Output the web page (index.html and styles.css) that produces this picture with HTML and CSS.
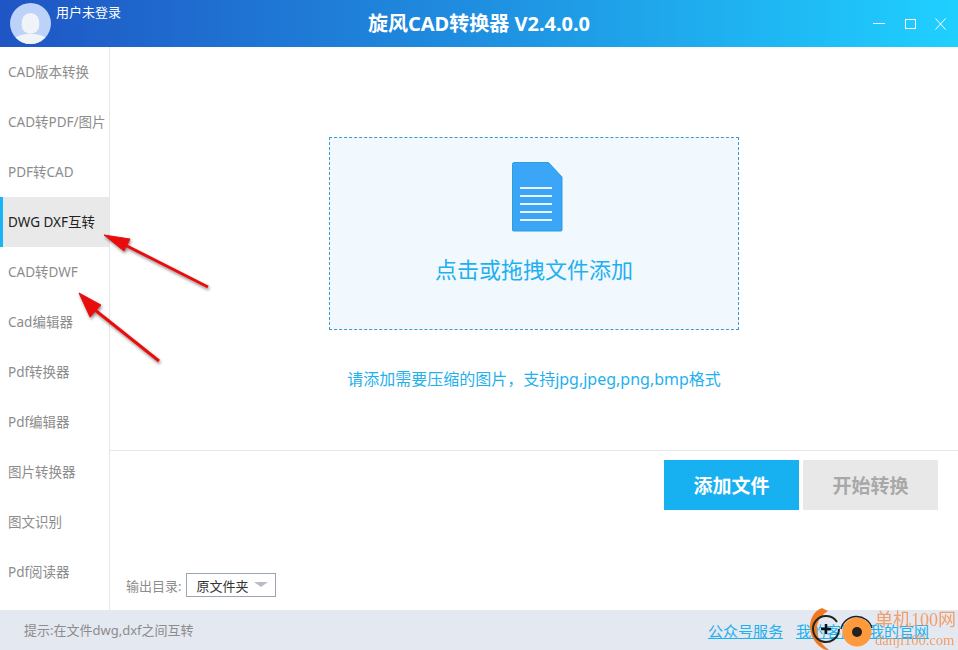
FILE: index.html
```html
<!DOCTYPE html>
<html lang="zh-CN">
<head>
  <meta charset="UTF-8" />
  <title>旋风CAD转换器</title>
  <link rel="stylesheet" href="styles.css">
</head>
<body>
  <div class="app">
    <header class="titlebar">
      <div class="user">
        <svg class="avatar" viewBox="0 0 40 40" width="41" height="41">
          <defs><clipPath id="av"><circle cx="20" cy="20" r="20"/></clipPath></defs>
          <circle cx="20" cy="20" r="20" fill="#bdd2f8"/>
          <g clip-path="url(#av)" fill="#f0f4f8">
            <rect x="11.500" y="10" width="17" height="20" rx="8"/>
            <ellipse cx="20" cy="40" rx="19" ry="10"/>
          </g>
        </svg>
        <span class="username">用户未登录</span>
      </div>
      <h1 class="title">旋风CAD转换器 V2.4.0.0</h1>
      <div class="winbtns">
        <svg class="win-min" width="12" height="12" viewBox="0 0 12 12"><path d="M0 5.500h12" stroke="#fff" fill="none"/></svg>
        <svg width="12" height="12" viewBox="0 0 12 12"><rect x="1.500" y="1.500" width="10" height="9" stroke="#fff" fill="none"/></svg>
        <svg width="12" height="12" viewBox="0 0 12 12"><path d="M1.500 .5l10 11M11.500 .5l-10 11" stroke="#fff" fill="none"/></svg>
      </div>
    </header>

    <div class="middle">
      <nav class="sidebar">
        <a href="#">CAD版本转换</a>
        <a href="#">CAD转PDF/图片</a>
        <a href="#">PDF转CAD</a>
        <a href="#" class="active">DWG DXF互转</a>
        <a href="#">CAD转DWF</a>
        <a href="#">Cad编辑器</a>
        <a href="#">Pdf转换器</a>
        <a href="#">Pdf编辑器</a>
        <a href="#">图片转换器</a>
        <a href="#">图文识别</a>
        <a href="#">Pdf阅读器</a>
      </nav>

      <main class="content">
        <section class="upload">
          <div class="dropzone">
            <svg class="fileicon" width="52" height="70" viewBox="0 0 52 70">
              <path d="M1.500 2.500 L1.500 68 Q1.500 69 2.500 69 L50 69 Q51 69 51 68 L51 15 L37.500 .5 L2.500 .5 Q1.500 .5 1.500 2.500Z" fill="#3ba5f8" stroke="#2a9fd8"/>
              <path d="M9 26h32M9 34h32M9 42h32M9 50h32M9 58h32" stroke="#edf3f8" stroke-width="2" fill="none"/>
            </svg>
            <p class="droptext">点击或拖拽文件添加</p>
          </div>
          <p class="hint">请添加需要压缩的图片，支持jpg,jpeg,png,bmp格式</p>
        </section>

        <section class="actions">
          <div class="buttons">
            <button class="btn primary">添加文件</button>
            <button class="btn disabled">开始转换</button>
          </div>
          <div class="output">
            <label>输出目录:</label>
            <div class="select">原文件夹<i class="caret"></i></div>
          </div>
        </section>
      </main>
    </div>

    <footer class="statusbar">
      <span class="tip">提示:在文件dwg,dxf之间互转</span>
      <div class="links">
        <a href="#">公众号服务</a>
        <a href="#">我的客服</a>
        <a href="#">我的官网</a>
      </div>
    </footer>

    <svg class="arrows" width="220" height="180" viewBox="0 0 220 180">
      <defs>
        <filter id="sh" x="-20%" y="-20%" width="150%" height="150%"><feDropShadow dx="1" dy="2" stdDeviation="1.500" flood-color="#000" flood-opacity=".45"/></filter>
      </defs>
      <g fill="#e80f0f" stroke="#e80f0f" filter="url(#sh)">
        <path d="M104 45 L130 49 L124 61Z"/>
        <path d="M125 55 L208 97" stroke-width="3" fill="none"/>
        <path d="M79 103 L101 115 L90 127Z"/>
        <path d="M95 120 L159 171" stroke-width="3" fill="none"/>
      </g>
    </svg>

    <div class="watermark">
      <svg class="wm-logo" width="70" height="42" viewBox="0 0 70 42">
        <path d="M12 0 C-4 6 -4 30 12 40 C15 42 17 42 19 42 C4 32 2 12 18 3Z" fill="#ef7a22"/>
        <path d="M27 14 A13 13 0 1 0 29 21" fill="none" stroke="#222" stroke-width="2"/>
        <path d="M11 21h10M16 16v10" stroke="#111" stroke-width="2.500" fill="none"/>
        <circle cx="47" cy="24" r="14.500" fill="#ff9a3c"/>
        <path d="M31 21 A16 16 0 0 1 62 20" fill="none" stroke="#222" stroke-width="1.500"/>
        <circle cx="47" cy="24" r="5" fill="#222"/>
      </svg>
      <div class="wm-text">
        <span class="wm-cn">单机100网</span>
        <span class="wm-en">danji100.com</span>
      </div>
    </div>
  </div>
</body>
</html>
```

FILE: styles.css
```css
html, body { margin:0; padding:0; }
body { font-family:"Noto Sans", "Noto Sans CJK SC", sans-serif; background:#fff; }
.app { position:relative; width:958px; height:650px; display:flex; flex-direction:column; overflow:hidden; }

.titlebar { height:47px; flex:none; display:flex; align-items:flex-start; position:relative; background:linear-gradient(90deg,#1f55c4 0%,#1f8fe0 50%,#1fd0ff 100%); color:#fff; }
.user { display:flex; align-items:flex-start; padding:3px 0 0 10px; }
.avatar { display:block; }
.username { font-size:13px; line-height:18px; margin:0 0 0 5px; }
.title { position:absolute; left:0; width:958px; top:11px; margin:0; text-align:center; font-size:20px; line-height:26px; font-weight:bold; }
.winbtns { margin-left:auto; display:flex; gap:18px; padding:18px 12px 0 0; }
.winbtns svg { display:block; }
.win-min { margin-right:1px; }

.middle { flex:1; display:flex; min-height:0; }
.sidebar { width:109px; flex:none; border-right:1px solid #e6e6e6; display:flex; flex-direction:column; }
.sidebar a { height:50px; flex:none; line-height:50px; padding-left:8px; font-size:13.500px; color:#8c8c8c; text-decoration:none; white-space:nowrap; box-sizing:border-box; }
.sidebar a.active { background:#e9e9e9; color:#222; border-left:3px solid #1ab3f5; padding-left:5px; }

.content { flex:1; display:flex; flex-direction:column; }
.upload { height:404px; flex:none; border-bottom:1px solid #e6e6e6; box-sizing:border-box; padding-top:90px; display:flex; flex-direction:column; align-items:center; }
.dropzone { width:410px; height:193px; box-sizing:border-box; border:1px dashed #3c9cc8; background:#f1f8fe; display:flex; flex-direction:column; align-items:center; padding-top:24px; }
.fileicon { display:block; margin-left:5px; }
.droptext { margin:22px 0 0; font-size:22px; line-height:30px; color:#1fb0ee; }
.hint { margin:39px 0 0; font-size:16px; line-height:20px; color:#1fb0ee; white-space:nowrap; }

.actions { flex:1; display:flex; flex-direction:column; justify-content:space-between; padding:9px 20px 13px 16px; }
.buttons { display:flex; justify-content:flex-end; gap:4px; }
.btn { width:135px; height:50px; border:none; font-family:inherit; font-size:19px; font-weight:bold; padding:0; }
.btn.primary { background:#17b1f2; color:#fff; }
.btn.disabled { background:#e8e8e8; color:#a8a8a8; }
.output { display:flex; align-items:center; gap:5px; font-size:13px; color:#8c8c8c; }
.select { height:24px; border:1px solid #9aa5b5; box-sizing:border-box; width:90px; line-height:25px; padding-left:9px; color:#333; position:relative; }
.caret { position:absolute; right:7px; top:8px; width:0; height:0; border-left:7px solid transparent; border-right:7px solid transparent; border-top:5px solid #b8bcc4; }

.statusbar { height:40px; flex:none; background:#e4e8f0; display:flex; align-items:center; justify-content:space-between; padding:0 29px 0 24px; font-size:13px; color:#8c8c8c; }
.tip { padding-bottom:2px; }
.links { display:flex; gap:13px; font-size:15px; }
.links a { color:#1fb0ee; }

.arrows { position:absolute; left:0; top:190px; pointer-events:none; }
.watermark { position:absolute; left:810px; top:608px; display:flex; pointer-events:none; }
.wm-logo { display:block; flex:none; }
.wm-text { display:flex; flex-direction:column; margin:2px 0 0 -5px; opacity:.9; }
.wm-cn { font-family:"Liberation Serif", "Noto Sans CJK SC", serif; font-size:18px; line-height:20px; color:#f5965a; white-space:nowrap; }
.wm-en { font-family:"Liberation Serif", serif; font-size:14.500px; line-height:15px; margin-top:3px; color:#f5965a; white-space:nowrap; }
```
